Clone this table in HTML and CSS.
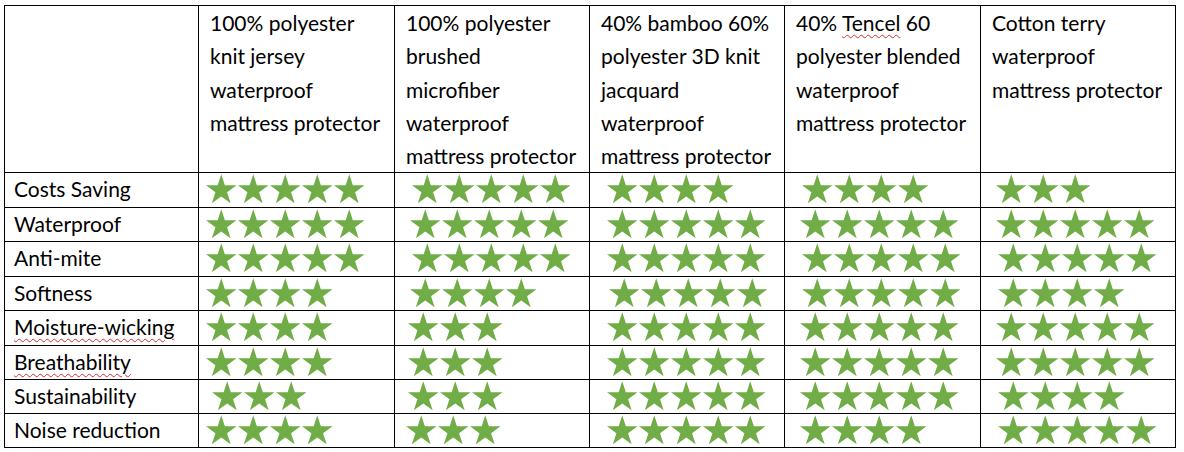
FILE: index.html
```html
<!DOCTYPE html>
<html lang="en">
<head>
<meta charset="utf-8">
<title>Mattress protector comparison</title>
<link rel="stylesheet" href="styles.css">
</head>
<body>
<svg class="defs" aria-hidden="true"><symbol id="s" viewBox="-47.55 -50 95.1 90.45"><polygon points="0,-50 11.23,-15.45 47.55,-15.45 18.17,5.9 29.39,40.45 0,19.1 -29.39,40.45 -18.17,5.9 -47.55,-15.45 -11.23,-15.45"/></symbol></svg>
<div class="page">
<div class="sheet">
  <div class="cell head"></div>
  <div class="cell head">100% polyester<br>knit jersey<br>waterproof<br>mattress protector</div>
  <div class="cell head">100% polyester<br>brushed<br>microfiber<br>waterproof<br>mattress protector</div>
  <div class="cell head">40% bamboo 60%<br>polyester 3D knit<br>jacquard<br>waterproof<br>mattress protector</div>
  <div class="cell head">40% <span class="spell">Tencel</span> 60<br>polyester blended<br>waterproof<br>mattress protector</div>
  <div class="cell head">Cotton terry<br>waterproof<br>mattress protector</div>

  <div class="cell label">Costs Saving</div>
  <div class="cell rate p8"><svg class="star"><use href="#s"/></svg><svg class="star"><use href="#s"/></svg><svg class="star"><use href="#s"/></svg><svg class="star"><use href="#s"/></svg><svg class="star"><use href="#s"/></svg></div>
  <div class="cell rate p18"><svg class="star"><use href="#s"/></svg><svg class="star"><use href="#s"/></svg><svg class="star"><use href="#s"/></svg><svg class="star"><use href="#s"/></svg><svg class="star"><use href="#s"/></svg></div>
  <div class="cell rate p18"><svg class="star"><use href="#s"/></svg><svg class="star"><use href="#s"/></svg><svg class="star"><use href="#s"/></svg><svg class="star"><use href="#s"/></svg></div>
  <div class="cell rate p18"><svg class="star"><use href="#s"/></svg><svg class="star"><use href="#s"/></svg><svg class="star"><use href="#s"/></svg><svg class="star"><use href="#s"/></svg></div>
  <div class="cell rate p16"><svg class="star"><use href="#s"/></svg><svg class="star"><use href="#s"/></svg><svg class="star"><use href="#s"/></svg></div>

  <div class="cell label">Waterproof</div>
  <div class="cell rate p8"><svg class="star"><use href="#s"/></svg><svg class="star"><use href="#s"/></svg><svg class="star"><use href="#s"/></svg><svg class="star"><use href="#s"/></svg><svg class="star"><use href="#s"/></svg></div>
  <div class="cell rate p16"><svg class="star"><use href="#s"/></svg><svg class="star"><use href="#s"/></svg><svg class="star"><use href="#s"/></svg><svg class="star"><use href="#s"/></svg><svg class="star"><use href="#s"/></svg></div>
  <div class="cell rate p18"><svg class="star"><use href="#s"/></svg><svg class="star"><use href="#s"/></svg><svg class="star"><use href="#s"/></svg><svg class="star"><use href="#s"/></svg><svg class="star"><use href="#s"/></svg></div>
  <div class="cell rate p16"><svg class="star"><use href="#s"/></svg><svg class="star"><use href="#s"/></svg><svg class="star"><use href="#s"/></svg><svg class="star"><use href="#s"/></svg><svg class="star"><use href="#s"/></svg></div>
  <div class="cell rate p16"><svg class="star"><use href="#s"/></svg><svg class="star"><use href="#s"/></svg><svg class="star"><use href="#s"/></svg><svg class="star"><use href="#s"/></svg><svg class="star"><use href="#s"/></svg></div>

  <div class="cell label">Anti-mite</div>
  <div class="cell rate p8"><svg class="star"><use href="#s"/></svg><svg class="star"><use href="#s"/></svg><svg class="star"><use href="#s"/></svg><svg class="star"><use href="#s"/></svg><svg class="star"><use href="#s"/></svg></div>
  <div class="cell rate p18"><svg class="star"><use href="#s"/></svg><svg class="star"><use href="#s"/></svg><svg class="star"><use href="#s"/></svg><svg class="star"><use href="#s"/></svg><svg class="star"><use href="#s"/></svg></div>
  <div class="cell rate p18"><svg class="star"><use href="#s"/></svg><svg class="star"><use href="#s"/></svg><svg class="star"><use href="#s"/></svg><svg class="star"><use href="#s"/></svg><svg class="star"><use href="#s"/></svg></div>
  <div class="cell rate p18"><svg class="star"><use href="#s"/></svg><svg class="star"><use href="#s"/></svg><svg class="star"><use href="#s"/></svg><svg class="star"><use href="#s"/></svg><svg class="star"><use href="#s"/></svg></div>
  <div class="cell rate p18"><svg class="star"><use href="#s"/></svg><svg class="star"><use href="#s"/></svg><svg class="star"><use href="#s"/></svg><svg class="star"><use href="#s"/></svg><svg class="star"><use href="#s"/></svg></div>

  <div class="cell label">Softness</div>
  <div class="cell rate p8"><svg class="star"><use href="#s"/></svg><svg class="star"><use href="#s"/></svg><svg class="star"><use href="#s"/></svg><svg class="star"><use href="#s"/></svg></div>
  <div class="cell rate p16"><svg class="star"><use href="#s"/></svg><svg class="star"><use href="#s"/></svg><svg class="star"><use href="#s"/></svg><svg class="star"><use href="#s"/></svg></div>
  <div class="cell rate p20"><svg class="star"><use href="#s"/></svg><svg class="star"><use href="#s"/></svg><svg class="star"><use href="#s"/></svg><svg class="star"><use href="#s"/></svg><svg class="star"><use href="#s"/></svg></div>
  <div class="cell rate p18"><svg class="star"><use href="#s"/></svg><svg class="star"><use href="#s"/></svg><svg class="star"><use href="#s"/></svg><svg class="star"><use href="#s"/></svg><svg class="star"><use href="#s"/></svg></div>
  <div class="cell rate p18"><svg class="star"><use href="#s"/></svg><svg class="star"><use href="#s"/></svg><svg class="star"><use href="#s"/></svg><svg class="star"><use href="#s"/></svg></div>

  <div class="cell label"><span class="spell">Moisture-wicking</span></div>
  <div class="cell rate p8"><svg class="star"><use href="#s"/></svg><svg class="star"><use href="#s"/></svg><svg class="star"><use href="#s"/></svg><svg class="star"><use href="#s"/></svg></div>
  <div class="cell rate p14"><svg class="star"><use href="#s"/></svg><svg class="star"><use href="#s"/></svg><svg class="star"><use href="#s"/></svg></div>
  <div class="cell rate p18"><svg class="star"><use href="#s"/></svg><svg class="star"><use href="#s"/></svg><svg class="star"><use href="#s"/></svg><svg class="star"><use href="#s"/></svg><svg class="star"><use href="#s"/></svg></div>
  <div class="cell rate p16"><svg class="star"><use href="#s"/></svg><svg class="star"><use href="#s"/></svg><svg class="star"><use href="#s"/></svg><svg class="star"><use href="#s"/></svg><svg class="star"><use href="#s"/></svg></div>
  <div class="cell rate p16"><svg class="star"><use href="#s"/></svg><svg class="star"><use href="#s"/></svg><svg class="star"><use href="#s"/></svg><svg class="star"><use href="#s"/></svg><svg class="star"><use href="#s"/></svg></div>

  <div class="cell label"><span class="spell">Breathability</span></div>
  <div class="cell rate p8"><svg class="star"><use href="#s"/></svg><svg class="star"><use href="#s"/></svg><svg class="star"><use href="#s"/></svg><svg class="star"><use href="#s"/></svg></div>
  <div class="cell rate p14"><svg class="star"><use href="#s"/></svg><svg class="star"><use href="#s"/></svg><svg class="star"><use href="#s"/></svg></div>
  <div class="cell rate p18"><svg class="star"><use href="#s"/></svg><svg class="star"><use href="#s"/></svg><svg class="star"><use href="#s"/></svg><svg class="star"><use href="#s"/></svg><svg class="star"><use href="#s"/></svg></div>
  <div class="cell rate p16"><svg class="star"><use href="#s"/></svg><svg class="star"><use href="#s"/></svg><svg class="star"><use href="#s"/></svg><svg class="star"><use href="#s"/></svg><svg class="star"><use href="#s"/></svg></div>
  <div class="cell rate p16"><svg class="star"><use href="#s"/></svg><svg class="star"><use href="#s"/></svg><svg class="star"><use href="#s"/></svg><svg class="star"><use href="#s"/></svg><svg class="star"><use href="#s"/></svg></div>

  <div class="cell label">Sustainability</div>
  <div class="cell rate p14"><svg class="star"><use href="#s"/></svg><svg class="star"><use href="#s"/></svg><svg class="star"><use href="#s"/></svg></div>
  <div class="cell rate p14"><svg class="star"><use href="#s"/></svg><svg class="star"><use href="#s"/></svg><svg class="star"><use href="#s"/></svg></div>
  <div class="cell rate p18"><svg class="star"><use href="#s"/></svg><svg class="star"><use href="#s"/></svg><svg class="star"><use href="#s"/></svg><svg class="star"><use href="#s"/></svg><svg class="star"><use href="#s"/></svg></div>
  <div class="cell rate p16"><svg class="star"><use href="#s"/></svg><svg class="star"><use href="#s"/></svg><svg class="star"><use href="#s"/></svg><svg class="star"><use href="#s"/></svg><svg class="star"><use href="#s"/></svg></div>
  <div class="cell rate p18"><svg class="star"><use href="#s"/></svg><svg class="star"><use href="#s"/></svg><svg class="star"><use href="#s"/></svg><svg class="star"><use href="#s"/></svg></div>

  <div class="cell label">Noise reduction</div>
  <div class="cell rate p8"><svg class="star"><use href="#s"/></svg><svg class="star"><use href="#s"/></svg><svg class="star"><use href="#s"/></svg><svg class="star"><use href="#s"/></svg></div>
  <div class="cell rate p12"><svg class="star"><use href="#s"/></svg><svg class="star"><use href="#s"/></svg><svg class="star"><use href="#s"/></svg></div>
  <div class="cell rate p18"><svg class="star"><use href="#s"/></svg><svg class="star"><use href="#s"/></svg><svg class="star"><use href="#s"/></svg><svg class="star"><use href="#s"/></svg><svg class="star"><use href="#s"/></svg></div>
  <div class="cell rate p16"><svg class="star"><use href="#s"/></svg><svg class="star"><use href="#s"/></svg><svg class="star"><use href="#s"/></svg><svg class="star"><use href="#s"/></svg></div>
  <div class="cell rate p18"><svg class="star"><use href="#s"/></svg><svg class="star"><use href="#s"/></svg><svg class="star"><use href="#s"/></svg><svg class="star"><use href="#s"/></svg><svg class="star"><use href="#s"/></svg></div>
</div>
</div>
</body>
</html>
```

FILE: styles.css
```css
html, body {
  margin: 0;
  padding: 0;
  background: #ffffff;
}

body {
  font-family: Lato, "Liberation Sans", sans-serif;
  color: #000000;
}

.defs {
  display: block;
  width: 0;
  height: 0;
  overflow: hidden;
}

.page {
  padding: 5px 0 0 4px;
}

.sheet {
  display: grid;
  grid-template-columns: 194px 196px 195px 195px 196px 195px;
  grid-template-rows: 167px 35px 34px 35px 34px 35px 34px 34px 34px;
  width: 1172px;
  box-sizing: border-box;
  border-left: 1px solid #000;
  border-top: 1px solid #000;
}

.cell {
  box-sizing: border-box;
  border-right: 1px solid #000;
  border-bottom: 1px solid #000;
  min-width: 0;
  overflow: hidden;
}

.head {
  font-size: 21px;
  line-height: 33.3px;
  padding: 0 0 0 11px;
  white-space: nowrap;
}

.label {
  font-size: 21px;
  line-height: 32px;
  padding: 0 0 0 9px;
  white-space: nowrap;
}

.spell {
  text-decoration: underline wavy #d03030;
  text-decoration-thickness: 1px;
  text-underline-offset: 3px;
}

.rate {
  display: flex;
  align-items: flex-start;
  gap: 1.5px;
  padding-top: 1px;
}

.star {
  width: 30.5px;
  height: 29.5px;
  flex: none;
  fill: #70ad47;
}

.p8 { padding-left: 7px; }
.p12 { padding-left: 11px; }
.p14 { padding-left: 13px; }
.p16 { padding-left: 15px; }
.p18 { padding-left: 17px; }
.p20 { padding-left: 19px; }
```
